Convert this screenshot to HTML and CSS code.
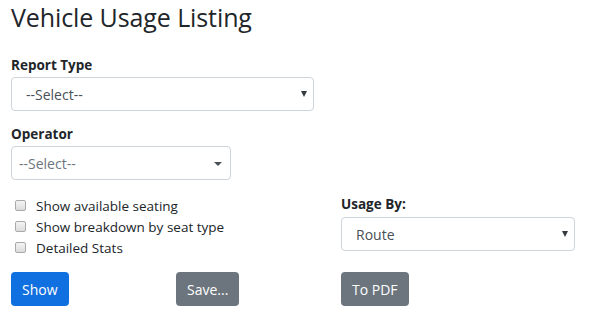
FILE: index.html
```html
<!doctype html>
<html lang="en">
<head>
<meta charset="utf-8">
<meta name="viewport" content="width=device-width,initial-scale=1">
<title>Vehicle Usage Listing</title>
<link rel="stylesheet" href="styles.css">
</head>
<body>

<main class="page">
  <h1>Vehicle Usage Listing</h1>

  <div class="field report">
    <label for="reportType">Report Type</label>
    <div class="sel-wrap">
      <select id="reportType" class="form-sel"><option>--Select--</option></select>
      <span class="caret"></span>
    </div>
  </div>

  <div class="field operator">
    <label for="operator">Operator</label>
    <div class="sel-wrap">
      <select id="operator" class="form-sel sel2"><option>--Select--</option></select>
      <span class="caret small"></span>
    </div>
  </div>

  <div class="options">
    <div class="checks">
      <label class="chk"><input type="checkbox"> Show available seating</label>
      <label class="chk"><input type="checkbox"> Show breakdown by seat type</label>
      <label class="chk"><input type="checkbox"> Detailed Stats</label>
    </div>
    <div class="field usage">
      <label for="usageBy">Usage By:</label>
      <div class="sel-wrap">
        <select id="usageBy" class="form-sel"><option>Route</option></select>
        <span class="caret"></span>
      </div>
    </div>
  </div>

  <div class="actions">
    <button type="button" class="btn primary">Show</button>
    <button type="button" class="btn secondary">Save...</button>
    <button type="button" class="btn secondary">To PDF</button>
  </div>
</main>

</body>
</html>
```

FILE: styles.css
```css
*{box-sizing:border-box;margin:0;padding:0}
body{
  font-family:'Open Sans','Noto Sans',sans-serif;font-size:14px;color:#212529;
  background:#fff
}
.page{padding:0 11px}
h1{font-size:25px;font-weight:500;line-height:34px;margin-bottom:22px;letter-spacing:-.1px}

.field label{display:block;font-weight:700;font-size:13.5px;line-height:18px;margin-bottom:3px}
.sel-wrap{position:relative}
.form-sel{
  appearance:none;-webkit-appearance:none;width:100%;height:34px;
  padding:0 24px 0 14px;border:1px solid #ced4da;border-radius:4px;background:#fff;
  font:inherit;font-size:14px;color:#495057
}
.form-sel.sel2{padding-left:7px;color:#6c757d}
.caret{
  position:absolute;right:7px;top:14px;width:0;height:0;
  border-left:3.5px solid transparent;border-right:3.5px solid transparent;border-top:6px solid #343a40
}
.caret.small{right:9px;top:16px;border-left-width:4px;border-right-width:4px;border-top:4px solid #495057}

.report{width:303px;margin-bottom:14px}
.operator{width:220px;margin-bottom:15px}

.options{display:grid;grid-template-columns:330px 234px;align-items:start}
.checks{display:flex;flex-direction:column}
.chk{display:flex;align-items:center;gap:10px;height:21px;font-size:13.5px;padding-left:4px}
.chk input{
  appearance:none;-webkit-appearance:none;width:11px;height:11px;
  border:1px solid #a9a9a9;border-radius:2px;background:linear-gradient(#f4f4f4,#dcdcdc)
}
.usage label{margin-bottom:4px}

.actions{display:grid;grid-template-columns:165px 165px auto;margin-top:14px;align-items:start}
.btn{
  justify-self:start;height:34px;padding:0 11px;border:none;border-radius:4px;
  font:inherit;font-size:14px;color:#fff;cursor:pointer
}
.btn.primary{background:#1170e0}
.btn.secondary{background:#6c757d}
```
